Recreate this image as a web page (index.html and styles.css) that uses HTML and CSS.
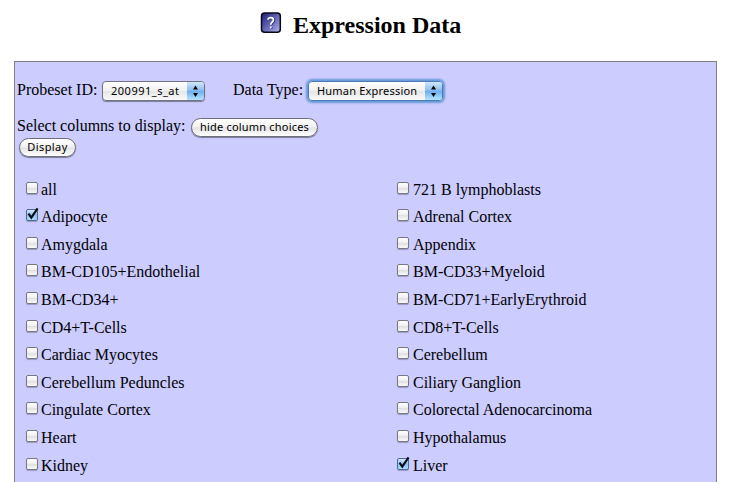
FILE: index.html
```html
<!DOCTYPE html>
<html lang="en">
<head>
<meta charset="utf-8">
<title>Expression Data</title>
<link rel="stylesheet" href="styles.css">
</head>
<body>
<header class="heading">
  <svg class="help" width="22" height="22" viewBox="0 0 22 22">
    <defs><linearGradient id="g" x1="0" y1="0" x2="1" y2="1"><stop offset="0" stop-color="#1c1c78"/><stop offset=".5" stop-color="#6565b4"/><stop offset="1" stop-color="#b4b4ee"/></linearGradient></defs>
    <rect x="1.5" y="1.1" width="18.8" height="19.2" rx="3" fill="url(#g)" stroke="#080818" stroke-width="1.5"/>
    <path d="M8.7 8.3C8.7 5.4 14.2 5.4 14.2 8.5C14.2 10.6 11.6 10.8 11.6 13.2M11.6 15v1.8" fill="none" stroke="#303070" stroke-width="1.8"/>
    <path d="M8 7.8C8 4.9 13.4 4.9 13.4 8C13.4 10.1 10.8 10.3 10.8 12.7M10.8 14.4v1.8" fill="none" stroke="#fff" stroke-width="1.7"/>
  </svg>
  <h1>Expression Data</h1>
</header>
<main class="panel">
  <div class="filters">
    <span class="lab probeset">Probeset ID:</span>
    <span class="select first"><span class="value">200991_s_at</span><span class="arrows"><svg width="17" height="18" viewBox="0 0 17 18"><path d="M6 7.5L8.5 3.5L11 7.5ZM6 11L8.5 15L11 11Z"/></svg></span></span>
    <span class="lab datatype">Data Type:</span>
    <span class="select second focused"><span class="value">Human Expression</span><span class="arrows"><svg width="17" height="18" viewBox="0 0 17 18"><path d="M6 7.5L8.5 3.5L11 7.5ZM6 11L8.5 15L11 11Z"/></svg></span></span>
  </div>
  <div class="columns-row">
    <span class="lab choose">Select columns to display:</span>
    <button class="hide">hide column choices</button>
  </div>
  <button class="display">Display</button>
  <div class="choices">
    <label><i class="box"></i><span>all</span></label>
    <label><i class="box"></i><span>721 B lymphoblasts</span></label>
    <label><i class="box on"><svg width="15" height="15" viewBox="0 0 15 15"><path d="M3.5 6.6L6.3 10.6L12.6 1.3"/></svg></i><span>Adipocyte</span></label>
    <label><i class="box"></i><span>Adrenal Cortex</span></label>
    <label><i class="box"></i><span>Amygdala</span></label>
    <label><i class="box"></i><span>Appendix</span></label>
    <label><i class="box"></i><span>BM-CD105+Endothelial</span></label>
    <label><i class="box"></i><span>BM-CD33+Myeloid</span></label>
    <label><i class="box"></i><span>BM-CD34+</span></label>
    <label><i class="box"></i><span>BM-CD71+EarlyErythroid</span></label>
    <label><i class="box"></i><span>CD4+T-Cells</span></label>
    <label><i class="box"></i><span>CD8+T-Cells</span></label>
    <label><i class="box"></i><span>Cardiac Myocytes</span></label>
    <label><i class="box"></i><span>Cerebellum</span></label>
    <label><i class="box"></i><span>Cerebellum Peduncles</span></label>
    <label><i class="box"></i><span>Ciliary Ganglion</span></label>
    <label><i class="box"></i><span>Cingulate Cortex</span></label>
    <label><i class="box"></i><span>Colorectal Adenocarcinoma</span></label>
    <label><i class="box"></i><span>Heart</span></label>
    <label><i class="box"></i><span>Hypothalamus</span></label>
    <label><i class="box"></i><span>Kidney</span></label>
    <label><i class="box on"><svg width="15" height="15" viewBox="0 0 15 15"><path d="M3.5 6.6L6.3 10.6L12.6 1.3"/></svg></i><span>Liver</span></label>
  </div>
</main>
</body>
</html>
```
FILE: styles.css
```css
* { box-sizing: border-box; }
html { overflow: hidden; }
body {
  margin: 0;
  height: 482px;
  overflow: hidden;
  background: #fff;
  color: #000;
  font: 16px/20px "Liberation Serif", "Times New Roman", serif;
}
.heading {
  height: 61px;
  display: flex;
  align-items: flex-start;
  padding: 12px 0 0 260px;
}
h1 {
  margin: 0 0 0 11px;
  font-size: 24px;
  line-height: 27px;
  white-space: nowrap;
}
.panel {
  margin-left: 14px;
  width: 703px;
  height: 440px;
  border: 1px solid #808080;
  background: #ccf;
  padding: 18px 2px 0;
}
.filters, .columns-row { display: flex; align-items: flex-start; }
.filters { height: 36px; }
.lab { white-space: nowrap; }
.probeset { width: 85px; }
.datatype { width: 75px; margin-left: 28px; }
.choose { width: 174px; }
.select {
  display: flex;
  height: 20px;
  margin-top: 1px;
  border: 1px solid #747480;
  border-radius: 4px;
  overflow: hidden;
  background: linear-gradient(#fff, #f1f1f1 48%, #e5e5e5 50%, #fafafa);
  box-shadow: 0 1px 1px rgba(0, 0, 0, .4);
  font: 11px/18px "Noto Sans", sans-serif;
}
.first { width: 103px; letter-spacing: .5px; }
.second { width: 135px; letter-spacing: .2px; }
.focused {
  border-color: #4b7cb8;
  box-shadow: 0 0 2px 2px #6699d8;
}
.value { flex: 1; padding-left: 8px; white-space: nowrap; }
.arrows {
  width: 17px;
  background: linear-gradient(#d2e6fa, #8fc0f0 45%, #6fafee 52%, #b5e4ff);
}
.arrows svg { display: block; }
button {
  display: block;
  height: 19px;
  padding: 0 0 2px;
  border: 1px solid #6e6e78;
  border-radius: 10px;
  background: linear-gradient(#fff, #f2f2f2 45%, #e4e4e4 52%, #fff);
  box-shadow: 0 1px 1px rgba(0, 0, 0, .4);
  color: #000;
  font: 11px/15px "Noto Sans", sans-serif;
  letter-spacing: .2px;
  white-space: nowrap;
}
.columns-row { height: 22px; }
.hide { width: 127px; margin-top: 2px; }
.display { width: 57px; margin: 0 0 0 2px; letter-spacing: .4px; }
.choices {
  display: grid;
  grid-template-columns: 371px 1fr;
  grid-auto-rows: 27.6px;
  padding: 18.6px 0 0 9px;
}
label { display: flex; align-items: flex-start; padding-top: 4px; white-space: nowrap; }
label:nth-child(even) .box { margin-right: 4px; }
.box {
  position: relative;
  width: 12px;
  height: 12px;
  margin: 2px 3px 0 0;
  border: 1px solid #777780;
  border-radius: 2px;
  background: linear-gradient(#fff, #f0f0f0 45%, #e1e1e1 55%, #fafafa);
  box-shadow: 0 1px 1px rgba(0, 0, 0, .25);
}
.on {
  border-color: #4a6c98;
  background: linear-gradient(#d7e8fa, #8fbff0 50%, #a9dbff);
}
.on svg { position: absolute; left: -2px; top: -3px; fill: none; stroke: #080c18; stroke-width: 2.1; }
```
